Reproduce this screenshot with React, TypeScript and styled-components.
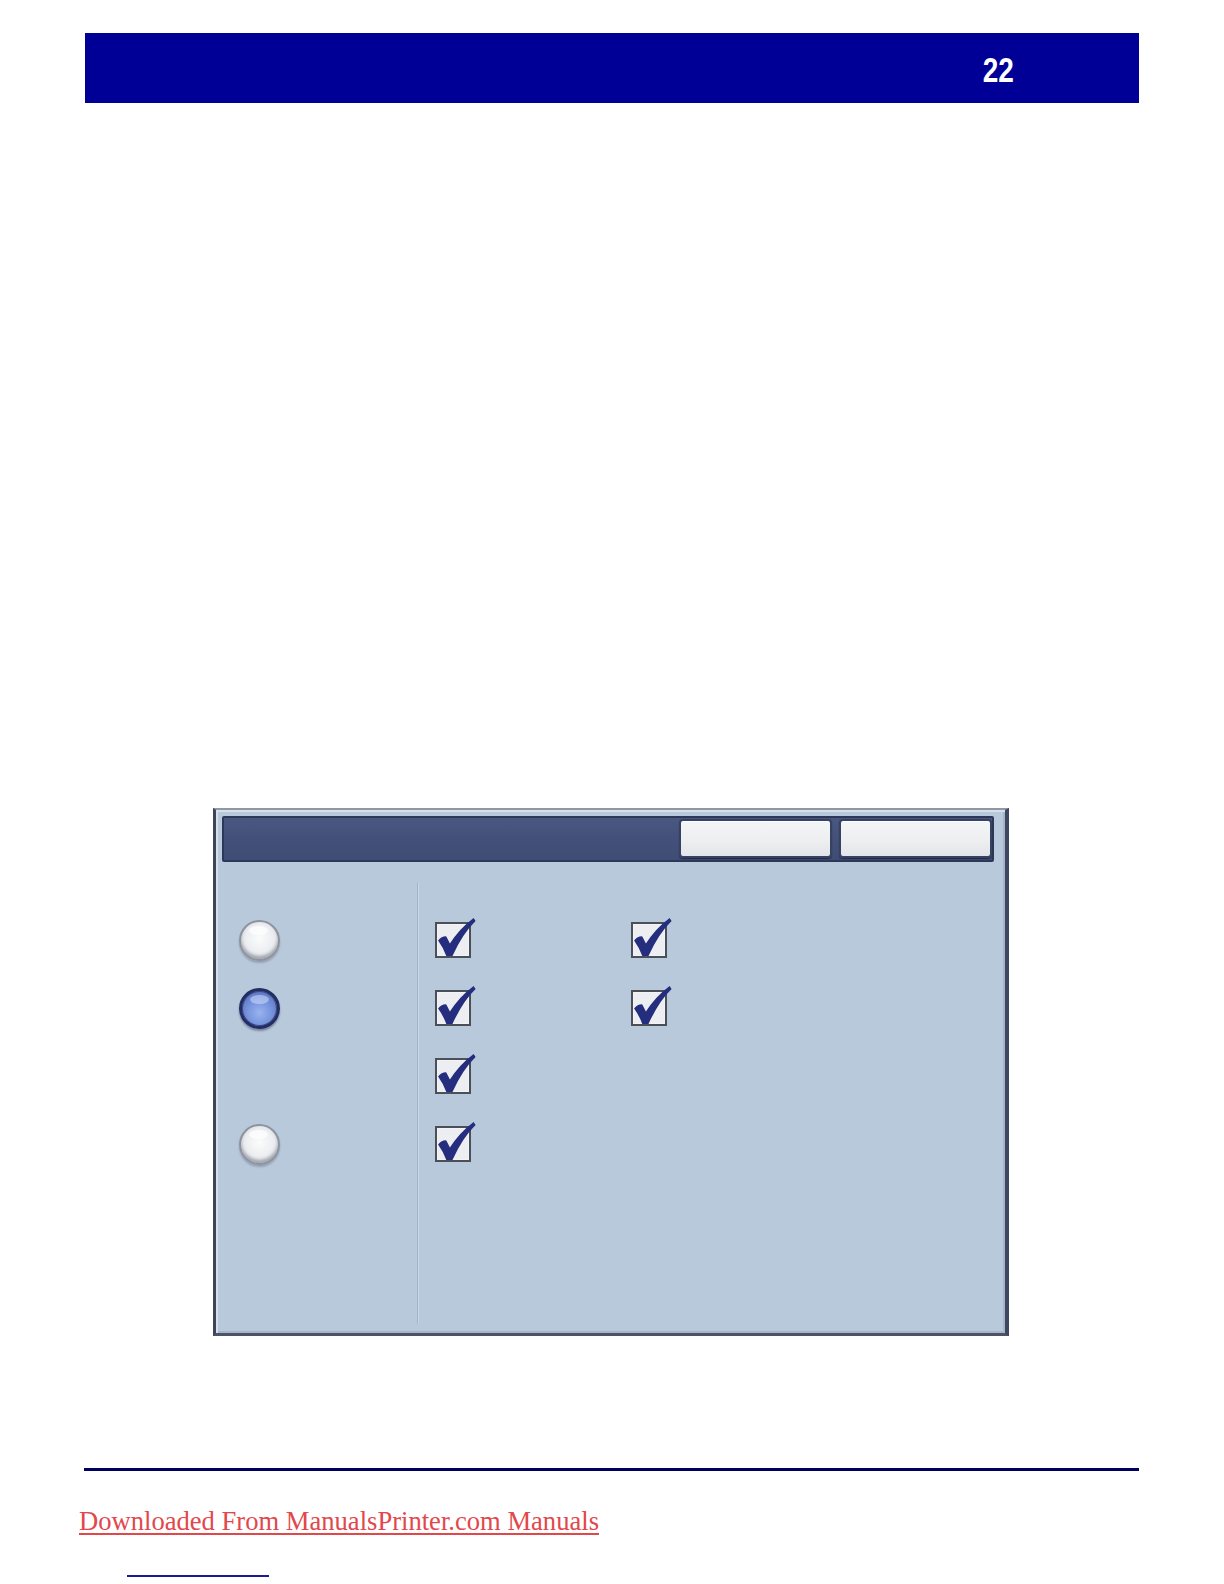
import styled, { createGlobalStyle } from 'styled-components';

const GlobalStyle = createGlobalStyle`
  html, body {
    margin: 0;
    padding: 0;
    background: #ffffff;
  }
  body {
    font-family: "Liberation Sans", Arial, sans-serif;
  }
`;

const Page = styled.div`
  width: 1224px;
  min-height: 1584px;
  padding-top: 33px;
  box-sizing: border-box;
`;

const Header = styled.div`
  margin-left: 85px;
  width: 1054px;
  height: 70px;
  background: #000096;
  display: flex;
  align-items: center;
  justify-content: flex-end;
  padding-right: 125px;
  box-sizing: border-box;
`;

const PageNumber = styled.span`
  display: inline-block;
  color: #ffffff;
  font-family: "Liberation Sans", Arial, sans-serif;
  font-weight: 700;
  font-size: 35px;
  line-height: 1;
  transform: scaleX(0.8);
  transform-origin: right center;
  margin-top: 2px;
`;

const Panel = styled.div`
  margin: 705px 0 0 213px;
  width: 796px;
  height: 528px;
  box-sizing: border-box;
  background: #b9c9dc;
  border-left: 3px solid #3d4658;
  border-top: 2px solid #8f98a6;
  border-right: 4px solid #3e4760;
  border-bottom: 3px solid #4b5368;
  display: flex;
  flex-direction: column;
  padding: 6px 11px 9px 6px;
  box-shadow: inset 2px 2px 0 #d6dfea, inset -2px -2px 0 #a7b5c8;
`;

const TitleBar = styled.div`
  height: 46px;
  box-sizing: border-box;
  background: linear-gradient(#495781, #43517a 50%, #3f4c74);
  border: 2px solid #2d3858;
  border-radius: 2px;
  display: flex;
  justify-content: flex-end;
  align-items: center;
  gap: 7px;
  padding: 0 0 1px 0;
`;

const HeaderButton = styled.div`
  width: 153px;
  height: 39px;
  box-sizing: border-box;
  background: linear-gradient(#f4f5f6, #eceef0 60%, #e2e5e9);
  border: 2px solid #354263;
  border-radius: 4px;
  box-shadow: inset 0 1px 0 #ffffff, 0 1px 1px #1f2942;
`;

const Body = styled.div`
  flex: 1;
  display: flex;
  padding-top: 21px;
`;

const LeftColumn = styled.div`
  width: 195px;
  padding-top: 23px;
  border-right: 1px solid #a3b3c8;
  box-shadow: 1px 0 0 #cad6e4;
  display: flex;
  flex-direction: column;
`;

const OptionColumn = styled.div`
  padding: 23px 0 0 17px;
  display: grid;
  grid-template-columns: 196px 196px;
  grid-auto-rows: 68px;
  align-content: start;
`;

const Row = styled.div`
  height: 68px;
  display: flex;
  align-items: center;
`;

const LeftRow = styled(Row)`
  padding-left: 17px;
`;

const Radio = styled.div<{ $checked?: boolean }>`
  width: 41px;
  height: 41px;
  border-radius: 50%;
  box-sizing: border-box;
  position: relative;
  border: ${(p) => (p.$checked ? '3px solid #232d62' : '2px solid #8e939c')};
  background: ${(p) =>
    p.$checked
      ? 'radial-gradient(circle at 50% 62%, #9ab4f0 0%, #7592dc 45%, #4a62aa 100%)'
      : 'radial-gradient(circle at 50% 45%, #fbfbfb 0%, #eceef1 50%, #c3c8d0 100%)'};
  box-shadow: ${(p) =>
    p.$checked
      ? 'inset 0 0 0 1px #3a4a88, 0 2px 2px rgba(40, 50, 90, 0.45)'
      : 'inset 0 -3px 3px #a4a9b2, 0 2px 2px rgba(90, 100, 120, 0.4)'};

  &::after {
    content: '';
    position: absolute;
    left: 8px;
    top: 4px;
    width: 19px;
    height: 9px;
    border-radius: 50%;
    background: ${(p) =>
      p.$checked ? 'rgba(215, 228, 255, 0.5)' : 'rgba(255, 255, 255, 0.7)'};
  }
`;

const CheckSvg = styled.svg`
  overflow: visible;
  display: block;
`;

const Checkbox = () => (
  <CheckSvg width="36" height="36" viewBox="0 0 35 35">
    <rect x="1" y="1" width="33" height="33" fill="#eceef1" stroke="#4a4f58" strokeWidth="2" />
    <rect x="2.5" y="2.5" width="30" height="30" fill="none" stroke="#ffffff" strokeWidth="1" opacity="0.6" />
    <path
      d="M3 18 Q7 13.5 11 14 L14.5 21 Q23 7 37.5 -4 L39.5 -1 Q27 11 17 33 L11 33 Q8 25 3 18 Z"
      fill="#252d7e"
    />
  </CheckSvg>
);

const Cell = styled.div`
  display: flex;
  align-items: center;
  padding-bottom: 1px;
`;

const FooterRule = styled.div`
  margin: 132px 0 0 84px;
  width: 1055px;
  height: 3px;
  background: #00005f;
`;

const DownloadLink = styled.a`
  display: block;
  margin: 37px 0 0 79px;
  width: max-content;
  font-family: "Liberation Serif", "Times New Roman", serif;
  font-size: 26.6px;
  line-height: 27px;
  color: #e2474c;
  text-decoration: underline;
  text-decoration-thickness: 2px;
  text-underline-offset: 3px;
`;

const ShortRule = styled.div`
  margin: 40px 0 0 127px;
  width: 142px;
  height: 2px;
  background: #1c1c92;
`;

const checks = [true, true, true, true, true, false, true, false];

export default function App() {
  return (
    <>
      <GlobalStyle />
      <Page>
        <Header>
          <PageNumber>22</PageNumber>
        </Header>

        <Panel>
          <TitleBar>
            <HeaderButton />
            <HeaderButton />
          </TitleBar>
          <Body>
            <LeftColumn>
              <LeftRow>
                <Radio />
              </LeftRow>
              <LeftRow>
                <Radio $checked />
              </LeftRow>
              <LeftRow />
              <LeftRow>
                <Radio />
              </LeftRow>
            </LeftColumn>
            <OptionColumn>
              {checks.map((on, i) => (
                <Cell key={i}>{on ? <Checkbox /> : null}</Cell>
              ))}
            </OptionColumn>
          </Body>
        </Panel>

        <FooterRule />
        <DownloadLink href="#">Downloaded From ManualsPrinter.com Manuals</DownloadLink>
        <ShortRule />
      </Page>
    </>
  );
}
